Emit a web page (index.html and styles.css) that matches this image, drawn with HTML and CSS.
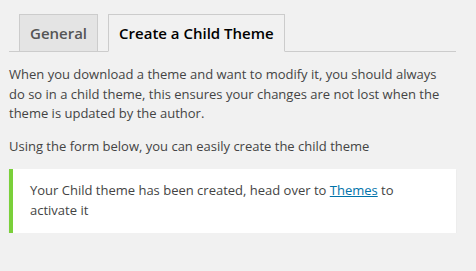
FILE: index.html
```html
<!DOCTYPE html>
<html>
<head>
    <title>Child Theme</title>
    <link rel="stylesheet" href="styles.css">
</head>

<body>
    <div class="wrap">
        <div class="tab-wrapper">
            <a class="tab">General</a>
            <a class="tab tab-active">Create a Child Theme</a>
        </div>

        <p class="intro">When you download a theme and want to modify it, you should always do so in a child theme, this ensures your changes are not lost when the theme is updated by the author.</p>
        <p class="intro">Using the form below, you can easily create the child theme</p>

        <div class="notice notice-success">
            <p>Your Child theme has been created, head over to <a href="#">Themes</a> to activate it</p>
        </div>
    </div>
</body>
</html>
```

FILE: styles.css
```css
body {
    margin: 0;
    background: #f1f1f1;
    color: #444;
    font-family: 'Open Sans', sans-serif;
    font-size: 13px;
    line-height: 1.5;
}

.wrap {
    padding: 14px 20px 0 9px;
}

.tab-wrapper {
    display: flex;
    gap: 10px;
    padding-left: 10px;
    border-bottom: 1px solid #ccc;
}

.tab {
    display: block;
    border: 1px solid #ccc;
    border-bottom: none;
    padding: 6px 10px;
    font-size: 15px;
    line-height: 24px;
    font-weight: 600;
    background: #e4e4e4;
    color: #555;
    text-decoration: none;
}

.tab-active {
    background: #f1f1f1;
    color: #000;
    border-bottom: 1px solid #f1f1f1;
    margin-bottom: -1px;
}

.intro {
    margin: 13px 0;
    max-width: 442px;
}

.notice {
    background: #fff;
    border-left: 4px solid #7ad03a;
    box-shadow: 0 1px 1px 0 rgba(0, 0, 0, .1);
    padding: 12px 30px 13px 17px;
}

.notice p {  margin: 0;  }

.notice a {  color: #0073aa;  }
```
